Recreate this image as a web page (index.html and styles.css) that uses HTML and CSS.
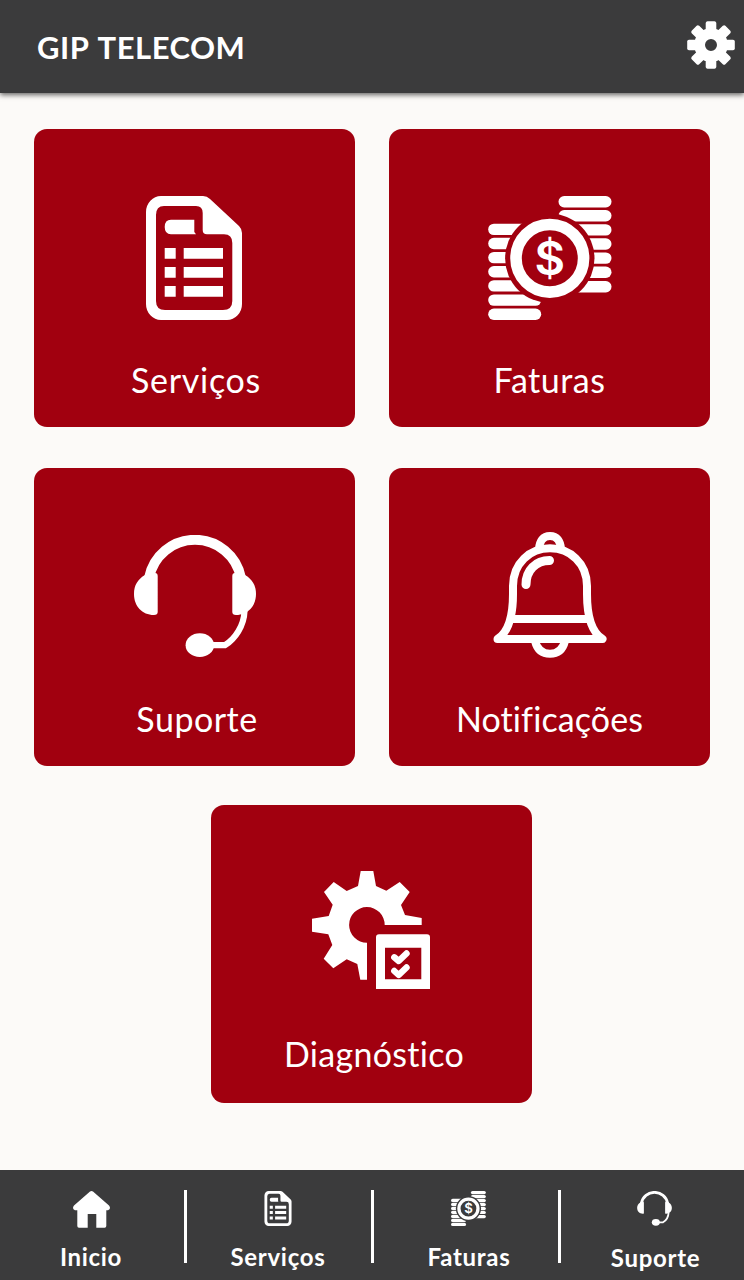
FILE: index.html
```html
<!DOCTYPE html>
<html lang="pt-BR">
<head>
    <meta charset="UTF-8">
    <meta name="viewport" content="width=device-width, initial-scale=1.0">
    <title>GIP Telecom</title>
    <link rel="stylesheet" href="styles.css">
</head>
<body>
    <!-- Ícones compartilhados entre os cards e o menu -->
    <svg class="sprite" width="0" height="0">
        <symbol id="icon-doc" viewBox="0 0 96 124">
            <path fill-rule="evenodd" d="M15 0H57Q61 0 64 3L93 30Q96 33 96 37V108A15 16 0 0 1 81 124H15A15 16 0 0 1 0 108V16A15 16 0 0 1 15 0ZM18 10Q10 10 10 19V105Q10 114 19 114H77Q86.300 114 86.300 105V47Q86.300 38.300 78 38.300H61Q56.700 38.300 56.700 34V17Q56.700 10 50 10Z"/>
            <path d="M25 23.700H48.300V36L50 38.300H25Q18.700 38.300 18.700 31T25 23.700ZM18.700 52H29.700V62.700H18.700ZM37.700 52H77V62.700H37.700ZM18.700 71H29.700V81.700H18.700ZM37.700 71H77V81.700H37.700ZM18.700 90H29.700V100.700H18.700ZM37.700 90H77V100.700H37.700Z"/>
        </symbol>
        <symbol id="icon-coins" viewBox="0 0 124 124">
            <mask id="coin-cut">
                <rect width="124" height="124" fill="#fff"/>
                <circle cx="61.800" cy="62.300" r="44.700" fill="#000"/>
            </mask>
            <g mask="url(#coin-cut)">
                <rect x="70.500" y="0" width="53" height="11.400" rx="5.700"/>
                <rect x="70.500" y="14.100" width="53" height="11.400" rx="5.700"/>
                <rect x="70.500" y="28.200" width="53" height="11.400" rx="5.700"/>
                <rect x="70.500" y="42.300" width="53" height="11.400" rx="5.700"/>
                <rect x="70.500" y="56.400" width="53" height="11.400" rx="5.700"/>
                <rect x="70.500" y="70.500" width="53" height="11.400" rx="5.700"/>
                <rect x="70.500" y="85" width="53" height="11.400" rx="5.700"/>
                <rect x="0.200" y="27.700" width="53" height="11.400" rx="5.700"/>
                <rect x="0.200" y="41.800" width="53" height="11.400" rx="5.700"/>
                <rect x="0.200" y="55.900" width="53" height="11.400" rx="5.700"/>
                <rect x="0.200" y="70" width="53" height="11.400" rx="5.700"/>
                <rect x="0.200" y="84.200" width="53" height="11.400" rx="5.700"/>
                <rect x="0.200" y="98.400" width="53" height="11.400" rx="5.700"/>
                <rect x="0.200" y="112.600" width="53" height="11.400" rx="5.700"/>
            </g>
            <circle cx="61.800" cy="62.300" r="33.800" fill="none" stroke="currentColor" stroke-width="11.600"/>
        </symbol>
        <symbol id="icon-headset" viewBox="0 0 122 123">
            <path d="M15 43A46.800 46.800 0 0 1 107 43" fill="none" stroke="currentColor" stroke-width="10"/>
            <path d="M13 38H21Q23.700 38 23.700 41V77Q23.700 80 20 80C8 80 0 71 0 59C0 50 4 44 11 40Z"/>
            <path d="M109 38H101Q98.300 38 98.300 41V77Q98.300 80 102 80C114 80 122 71 122 59C122 50 118 44 111 40Z"/>
            <path d="M110.500 76C110 91 101 104 91 110.200H76" fill="none" stroke="currentColor" stroke-width="6.200"/>
            <ellipse cx="65.800" cy="110.200" rx="14.200" ry="11.900"/>
        </symbol>
        <symbol id="icon-bell" viewBox="0 0 114 126">
            <g fill="none" stroke="currentColor" stroke-width="8" stroke-linecap="round" stroke-linejoin="round">
                <path d="M4.500 107C14 101 20 86 20 62V54C20 31 37 16.300 57 16.300S94 31 94 54V62C94 86 100 101 109.500 107Z"/>
                <path d="M19 87H95"/>
                <path d="M46 17C46.500 9 50 4 57 4S67.500 9 68 17"/>
                <path d="M42 109C44 117 49 121.800 57 121.800S70 117 72 109"/>
                <path d="M33 52.500C33 38 43 28.500 56.500 28.500" stroke-width="9"/>
            </g>
        </symbol>
        <symbol id="icon-diagnostic" viewBox="0 0 118 118">
            <path d="M48.700 0H61.300L64 15L74.300 19.700L87.700 11L97.700 21L89 34L93 44L109.700 47V54H72.700A17.800 17.800 0 1 0 55 71.700V108.700H48.300L45.300 93L34.700 88.300L21.300 97.300L11.700 87.700L20.300 74L16.300 63.300L0 60.700V47.700L16.700 45L20.700 33.700L12 21L21.700 11L34.700 20L46 15Z"/>
            <path fill-rule="evenodd" d="M67 63.300H115Q118 63.300 118 66.300V118H64V66.300Q64 63.300 67 63.300ZM73 76.700V108.300H109.300V76.700Z"/>
            <path d="M82.300 86.300L86.700 90L94.500 82.500M82.300 100L86.700 104L94.500 96.500" fill="none" stroke="currentColor" stroke-width="6.400" stroke-linecap="round" stroke-linejoin="round"/>
        </symbol>
        <symbol id="icon-home" viewBox="0 0 37 37">
            <path d="M17 .5Q18.500-.5 20 .5L36 14.500Q37 15.500 37 17T35 19.300H33.300V35Q33.300 36.700 31.600 36.700H23.300V23H14.700V36.700H6Q4.300 36.700 4.300 35V19.300H2Q0 18.500 0 17T1 14.500Z"/>
        </symbol>
        <symbol id="icon-gear" viewBox="-24 -24 48 48">
            <circle r="11.400" fill="none" stroke="currentColor" stroke-width="10.800"/>
            <path id="tooth" d="M-5.300-14V-22Q-5-23.800-3.500-23.800H3.500Q5-23.800 5.300-22V-14Z"/>
            <use href="#tooth" transform="rotate(45)"/>
            <use href="#tooth" transform="rotate(90)"/>
            <use href="#tooth" transform="rotate(135)"/>
            <use href="#tooth" transform="rotate(180)"/>
            <use href="#tooth" transform="rotate(225)"/>
            <use href="#tooth" transform="rotate(270)"/>
            <use href="#tooth" transform="rotate(315)"/>
        </symbol>
    </svg>

    <div class="app">
        <header class="header">
            <h1>GIP TELECOM</h1>
            <svg class="settings"><use href="#icon-gear"/></svg>
        </header>

        <!-- Cards principais -->
        <main class="cards">
            <a class="card card-servicos">
                <svg width="96" height="124"><use href="#icon-doc"/></svg>
                <span>Serviços</span>
            </a>
            <a class="card card-faturas">
                <svg width="124" height="124" viewBox="0 0 124 124">
                    <use href="#icon-coins"/>
                    <text class="coin-sign" x="61.800" y="79.400" text-anchor="middle">$</text>
                </svg>
                <span>Faturas</span>
            </a>
            <a class="card card-suporte">
                <svg width="122" height="123"><use href="#icon-headset"/></svg>
                <span>Suporte</span>
            </a>
            <a class="card card-notificacoes">
                <svg width="114" height="126"><use href="#icon-bell"/></svg>
                <span>Notificações</span>
            </a>
            <a class="card card-diagnostico">
                <svg width="118" height="118"><use href="#icon-diagnostic"/></svg>
                <span>Diagnóstico</span>
            </a>
        </main>

        <!-- Menu inferior -->
        <nav class="navbar">
            <a class="nav-item nav-inicio">
                <svg width="37" height="37"><use href="#icon-home"/></svg>
                <span>Inicio</span>
            </a>
            <a class="nav-item nav-servicos">
                <svg width="28" height="35"><use href="#icon-doc"/></svg>
                <span>Serviços</span>
            </a>
            <a class="nav-item nav-faturas">
                <svg width="35" height="35" viewBox="0 0 124 124">
                    <use href="#icon-coins"/>
                    <text class="coin-sign" x="61.800" y="79.400" text-anchor="middle">$</text>
                </svg>
                <span>Faturas</span>
            </a>
            <a class="nav-item nav-suporte">
                <svg width="35" height="35"><use href="#icon-headset"/></svg>
                <span>Suporte</span>
            </a>
        </nav>
    </div>
</body>
</html>
```
FILE: styles.css
```css
* {
    box-sizing: border-box;
}

body {
    font-family: Lato, 'Open Sans', sans-serif;
    margin: 0;
    background: #fcfaf8;
    color: #fff;
}

svg {
    display: block;
    fill: currentColor;
}

.sprite {
    position: absolute;
}

.coin-sign {
    font-family: Inter, Arial, sans-serif;
    font-size: 47px;
    font-weight: 600;
    letter-spacing: 0;
}

.app {
    display: flex;
    flex-direction: column;
    width: 744px;
    height: 1280px;
    overflow: hidden;
}

.header {
    display: flex;
    justify-content: space-between;
    align-items: flex-start;
    height: 93px;
    padding: 21px 9px 0 37px;
    background: #3b3b3c;
    box-shadow: 0 2px 5px rgba(0,0,0,0.6);
}

.header h1 {
    margin: 6px 0 0;
    font-size: 31px;
    line-height: 40px;
    font-weight: 700;
    letter-spacing: 0.5px;
    word-spacing: 2px;
}

.settings {
    width: 48px;
    height: 48px;
}

.cards {
    flex: 1;
    display: grid;
    grid-template-columns: 321px 321px;
    grid-auto-rows: 298px;
    column-gap: 34px;
    row-gap: 41px;
    padding: 36px 34px 0;
}

.card {
    display: flex;
    flex-direction: column;
    justify-content: space-between;
    align-items: center;
    padding: 67px 0 27px;
    border-radius: 13px;
    background: #a1000f;
    font-size: 34px;
    line-height: 40px;
    letter-spacing: 0.5px;
}

.card-servicos {
    padding-right: 1px;
}

.card-servicos span {
    margin-left: 4px;
    letter-spacing: 0.7px;
}

.card-suporte span {
    margin-left: 5px;
}

.card-notificacoes {
    padding-top: 64px;
    letter-spacing: 0.1px;
}

.card-diagnostico {
    grid-column: 1 / 3;
    justify-self: center;
    width: 321px;
    height: 298px;
    margin: -2px 1px 0 0;
    padding: 66px 1px 29px 0;
    letter-spacing: 0.3px;
}

.card-diagnostico span {
    margin-left: 6px;
}

.navbar {
    display: grid;
    grid-template-columns: 187px 187px 187px 183px;
    height: 110px;
    padding: 20px 0 17px;
    background: #3b3b3c;
}

.nav-item {
    display: flex;
    flex-direction: column;
    justify-content: space-between;
    align-items: center;
    padding-top: 1px;
    border-right: 3px solid #fff;
    font-size: 24px;
    font-weight: 700;
    line-height: 20px;
    letter-spacing: 0.7px;
}

.nav-item span {
    margin-bottom: -4px;
}

.nav-inicio {
    padding-right: 2px;
}

.nav-servicos {
    padding-right: 2px;
}

.nav-faturas {
    padding-left: 5px;
}

.nav-faturas span {
    margin-left: 1px;
}

.nav-suporte {
    padding-left: 4px;
    border-right: none;
}

.nav-suporte span {
    margin: 0 0 -5px 2px;
}
```
